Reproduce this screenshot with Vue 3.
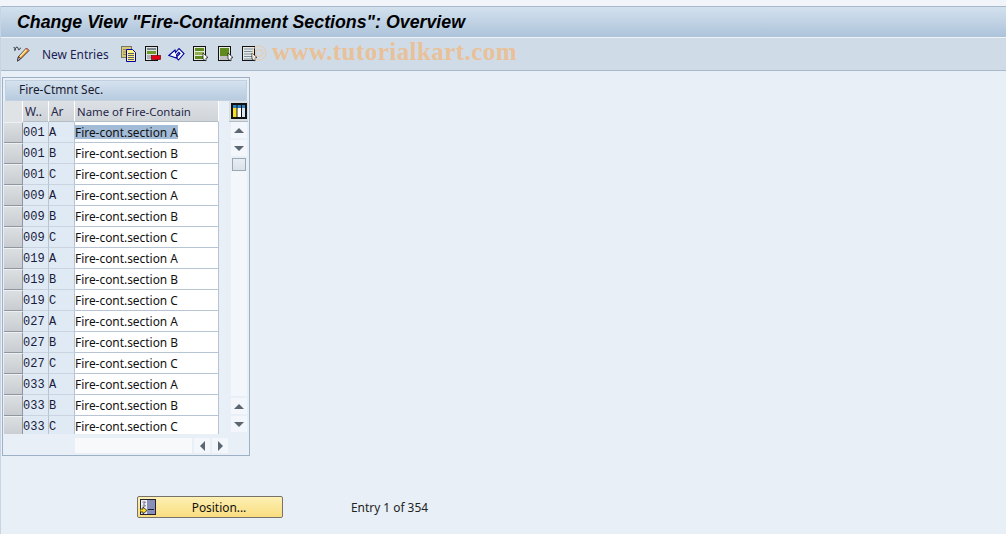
<template>
  <div class="screen">
    <div class="top-strip"></div>

    <!-- TITLE -->
    <div class="title-bar">
      <h1>Change View "Fire-Containment Sections": Overview</h1>
    </div>

    <!-- TOOLBAR -->
    <div class="toolbar">
      <svg class="ico pencil" width="17" height="16" viewBox="0 0 17 16">
        <path d="M.5 2c1-2 2.500 2 1.500 2.500S2.500 1 4 1s1 3.500 2 3 1-2.500 2-2" fill="none" stroke="#333" stroke-width="1" />
        <path d="M4.500 15l1-4.500L13.500 2 16 4.500 7.500 13z" fill="#f4a530" stroke="#3a3040" stroke-width="1" />
        <path d="M7 10.500l6.500-7" stroke="#fff0b0" stroke-width="1.300" />
        <path d="M4.500 15l1-4.500 2 2.500z" fill="#fff" stroke="#3a3040" stroke-width="1" />
        <path d="M13.500 2.500L15.500 4.500" stroke="#e06a50" stroke-width="1.500" />
      </svg>
      <span class="new-entries">New Entries</span>

      <svg class="ico copy" width="16" height="16" viewBox="0 0 16 16">
        <rect x="0.500" y="0.500" width="10" height="11" fill="#d8c878" stroke="#77776a" />
        <path d="M2 3.500h7M2 6h3M2 8.500h3" stroke="#8d8a60" />
        <path d="M5.500 3.500h6l3 3v9h-9z" fill="#fff27a" stroke="#0000b0" />
        <path d="M7 7.500h6M7 9.500h6M7 11.500h6M7 13.500h6" stroke="#5a5a70" />
      </svg>
      <svg class="ico delete" width="16" height="16" viewBox="0 0 16 16">
        <rect x="0.500" y="0.500" width="12" height="14" fill="#dfe3e6" stroke="#111" />
        <path d="M2 3h9" stroke="#7a8890" stroke-width="2" />
        <rect x="2" y="5" width="9" height="3" fill="#6d9a2a" />
        <path d="M2 10h5M2 12h5" stroke="#7a8890" />
        <rect x="6.500" y="9.500" width="9" height="4" fill="#e2001a" stroke="#7a0000" stroke-width="0.700" />
      </svg>
      <svg class="ico undo" width="17" height="16" viewBox="0 0 17 16">
        <path d="M.8 9.500L7 4l.6 2.500L11 2.500 16 7.500 10.500 14 8 11.500l4-4-1.200-1.200L8.500 9l.8 3.300z" fill="#f6f8ff" stroke="#00009c" stroke-width="1.100" />
      </svg>
      <svg class="ico prev" width="16" height="16" viewBox="0 0 16 16">
        <rect x="0.500" y="0.500" width="12" height="14" fill="#e6e9e4" stroke="#111" />
        <rect x="2" y="2" width="9" height="3" fill="#5f8a1f" />
        <rect x="2" y="6" width="9" height="3" fill="#8fb04a" />
        <rect x="2" y="10" width="9" height="3" fill="#5f8a1f" />
        <path d="M10 7l5 4.500-2 .5v3l-3-2z" fill="#fff" stroke="#111" stroke-width="0.700" />
      </svg>
      <svg class="ico next" width="16" height="16" viewBox="0 0 16 16">
        <rect x="0.500" y="0.500" width="12" height="14" fill="#e6e9e4" stroke="#111" />
        <rect x="2" y="2" width="9" height="8" fill="#5f8a1f" />
        <path d="M2 11h9M2 13h9" stroke="#99a" />
        <path d="M10 7l5 4.500-2 .5v3l-3-2z" fill="#fff" stroke="#111" stroke-width="0.700" />
      </svg>
      <svg class="ico other" width="16" height="16" viewBox="0 0 16 16">
        <rect x="0.500" y="0.500" width="12" height="14" fill="#e6e9e4" stroke="#111" />
        <path d="M2 3h9M2 5.500h9M2 8h9M2 10.500h9M2 13h9" stroke="#7a90a0" stroke-width="1.200" />
        <path d="M10 7l5 4.500-2 .5v3l-3-2z" fill="#fff" stroke="#111" stroke-width="0.700" />
      </svg>

      <!-- WATERMARK -->
      <svg class="mark-ring" width="16" height="18" viewBox="0 0 16 18">
        <circle cx="7" cy="9" r="7" fill="none" stroke="#ecc8a4" stroke-width="1" />
        <circle cx="7" cy="9" r="3.500" fill="none" stroke="#ecc8a4" stroke-width="1" />
      </svg>
      <span class="watermark">www.tutorialkart.com</span>
    </div>

    <!-- TABLE PANEL -->
    <div class="panel">
      <div class="panel-title">Fire-Ctmnt Sec.</div>

      <div class="grid-wrap">
        <div class="grid">
          <div class="head-row">
            <div class="sel-head"></div>
            <div class="col-w th">W..</div>
            <div class="col-ar th">Ar</div>
            <div class="col-name th name-head">Name of Fire-Contain</div>
          </div>
          <div class="row" v-for="(r, i) in rows" :key="i">
            <div class="sel"></div>
            <div class="col-w td-key">{{ r.w }}</div>
            <div class="col-ar td-key">{{ r.ar }}</div>
            <div class="col-name td-name">
              <span :class="{ selected: i === 0 }">Fire-cont.section {{ r.ar }}</span>
            </div>
          </div>
        </div>

        <!-- VERTICAL SCROLLBAR -->
        <div class="v-side">
          <button class="config">
            <svg width="16" height="16" viewBox="0 0 16 16">
              <rect width="16" height="16" fill="#111" />
              <rect x="2" y="2" width="3.500" height="3" fill="#2f7fc0" />
              <rect x="6.500" y="2" width="3.500" height="3" fill="#2f7fc0" />
              <rect x="11" y="2" width="3" height="3" fill="#2f7fc0" />
              <rect x="2" y="5" width="3.500" height="9" fill="#f8e020" />
              <rect x="6.500" y="5" width="3.500" height="9" fill="#fff" />
              <rect x="11" y="5" width="3" height="9" fill="#d8e4ee" />
            </svg>
          </button>
          <div class="v-scroll">
            <button class="sb"><i class="arrow up"></i></button>
            <button class="sb"><i class="arrow down"></i></button>
            <div class="thumb"></div>
            <div class="track"></div>
            <button class="sb"><i class="arrow up"></i></button>
            <button class="sb"><i class="arrow down"></i></button>
          </div>
        </div>
      </div>

      <!-- HORIZONTAL SCROLLBAR -->
      <div class="h-scroll">
        <div class="h-track"></div>
        <button class="sb"><i class="arrow left"></i></button>
        <button class="sb"><i class="arrow right"></i></button>
      </div>
    </div>

    <!-- FOOTER -->
    <div class="footer">
      <button class="position">
        <svg width="16" height="16" viewBox="0 0 16 16">
          <rect x="0.500" y="0.500" width="15" height="15" fill="#eef0f6" stroke="#223" />
          <rect x="7" y="1" width="8" height="14" fill="#8890b8" />
          <path d="M8 10.500h6" stroke="#223" />
          <path d="M2.500 3h3L3.500 5l2 2h-3" fill="none" stroke="#667" />
          <path d="M0 10h3V8l4 3.500L3 15v-2H0z" fill="#f8d820" stroke="#222" stroke-width="0.800" />
        </svg>
        <span>Position...</span>
      </button>
      <span class="entry-count">Entry 1 of 354</span>
    </div>
  </div>
</template>

<script setup>
const keys = ['001', '009', '019', '027', '033']
const areas = ['A', 'B', 'C']

const rows = keys.flatMap((w) => areas.map((ar) => ({ w, ar })))
</script>

<style>
html,
body {
  margin: 0;
  background: #e8eff7;
}
</style>

<style scoped>
.screen {
  width: 1006px;
  height: 534px;
  overflow: hidden;
  background: #e8eff7;
  box-shadow: inset 1px 0 #c8d4e2;
  font-family: "Noto Sans", sans-serif;
  font-size: 11.900px;
  color: #111;
}

.top-strip {
  height: 6px;
  background: #f1f5fa;
}

/* TITLE */
.title-bar {
  height: 31px;
  margin-left: 1px;
  display: flex;
  align-items: center;
  padding-left: 16px;
  border-top: 1px solid #a9b7cb;
  box-sizing: border-box;
  background: linear-gradient(to bottom, #d3e1ee, #adc3da);
}

.title-bar h1 {
  margin: 0;
  font-family: "Liberation Sans", sans-serif;
  font-size: 17.800px;
  font-style: italic;
  font-weight: 700;
  color: #000;
}

/* TOOLBAR */
.toolbar {
  position: relative;
  height: 34px;
  margin-left: 1px;
  box-sizing: border-box;
  border-top: 1px solid #eef3f8;
  border-bottom: 1px solid #a9b9cc;
  background: #cfdce8;
  display: flex;
  align-items: center;
}

.ico {
  flex: none;
}

.pencil {
  margin-left: 12px;
}

.new-entries {
  margin-left: 12px;
  color: #1c1c50;
}

.copy { margin-left: 12px; }
.delete { margin-left: 8px; }
.undo { margin-left: 7px; }
.prev { margin-left: 8px; }
.next { margin-left: 9px; }
.other { margin-left: 8px; }

.mark-ring {
  position: absolute;
  left: 251px;
  top: 6px;
}

.watermark {
  position: absolute;
  left: 271px;
  top: 0;
  font-family: "Liberation Serif", serif;
  font-size: 25px;
  font-weight: 700;
  letter-spacing: 0.450px;
  color: #e9c199;
}

/* TABLE PANEL */
.panel {
  width: 248px;
  height: 379px;
  margin: 6px 0 0 2px;
  box-sizing: border-box;
  border: 1px solid #9db0c6;
  padding: 2px 2px 0 1px;
  background: #e8eff7;
}

.panel-title {
  height: 21px;
  line-height: 17px;
  margin-left: 1px;
  padding-left: 13px;
  box-sizing: border-box;
  border: 1px solid #c3d0df;
  background: linear-gradient(to bottom, #d5e2ef, #b7cbdf);
  color: #1a1a30;
}

.grid-wrap {
  display: flex;
}

.grid {
  width: 215px;
  height: 333px;
  overflow: hidden;
  flex: none;
}

.head-row,
.row {
  display: flex;
  height: 21px;
}

.sel-head {
  width: 19px;
  background: #dfe3e6;
  border-right: 1px solid #fff;
  box-sizing: border-box;
}

.sel {
  width: 19px;
  box-sizing: border-box;
  background: linear-gradient(to bottom, #dcdfe2, #c8ccd0);
  border-right: 1px solid #8e979f;
  border-bottom: 1px solid #8e979f;
  border-top: 1px solid #eef0f2;
}

.col-w {
  width: 26px;
}

.col-ar {
  width: 26px;
}

.col-name {
  width: 144px;
}

.col-w,
.col-ar,
.col-name {
  flex: none;
  box-sizing: border-box;
}

.th {
  background: linear-gradient(to bottom, #dde1e5, #cfd4d9);
  border-right: 1px solid #fff;
  border-bottom: 1px solid #b4bcc5;
  line-height: 21px;
  padding-left: 2px;
  white-space: nowrap;
  color: #26264a;
}

.name-head {
  font-size: 11.400px;
}

.td-key {
  background: #dfeaf5;
  border-right: 1px solid #b7c4d3;
  border-bottom: 1px solid #c9d4e0;
  font-family: "Liberation Mono", monospace;
  font-size: 12px;
  line-height: 22px;
  color: #1a1a3a;
}

.td-name {
  background: #fff;
  border-right: 1px solid #b7c4d3;
  border-bottom: 1px solid #b7c4d3;
  line-height: 21px;
  color: #111;
}

.selected {
  display: inline-block;
  height: 14px;
  line-height: 14px;
  background: #a2bbd6;
}

/* SCROLLBARS */
.v-side {
  width: 28px;
  flex: none;
}

.config {
  display: block;
  width: 19px;
  height: 21px;
  margin-left: 10px;
  padding: 2px;
  border: 0;
  border-bottom: 1px solid #b4bcc5;
  background: #d9dee3;
  box-sizing: border-box;
}

.config svg {
  display: block;
}

.v-scroll {
  margin-left: 12px;
  width: 16px;
  display: flex;
  flex-direction: column;
  height: 312px;
}

.sb {
  flex: none;
  width: 16px;
  height: 16px;
  padding: 0;
  margin: 0 0 2px;
  border: 0;
  background: #f3f6fa;
  display: flex;
  align-items: center;
  justify-content: center;
}

.arrow {
  display: block;
  width: 0;
  height: 0;
}

.arrow.up {
  border-left: 5px solid transparent;
  border-right: 5px solid transparent;
  border-bottom: 5px solid #5b6670;
}

.arrow.down {
  border-left: 5px solid transparent;
  border-right: 5px solid transparent;
  border-top: 5px solid #5b6670;
}

.arrow.left {
  border-top: 5px solid transparent;
  border-bottom: 5px solid transparent;
  border-right: 5px solid #5b6670;
}

.arrow.right {
  border-top: 5px solid transparent;
  border-bottom: 5px solid transparent;
  border-left: 5px solid #5b6670;
}

.thumb {
  flex: none;
  width: 14px;
  height: 13px;
  margin-left: 1px;
  box-sizing: border-box;
  border: 1px solid #9aa8b6;
  background: linear-gradient(to bottom, #e9eef3, #d9e1e9);
}

.track {
  flex: 1;
  background: #f3f6fa;
  margin-bottom: 2px;
}

.h-scroll {
  display: flex;
  gap: 2px;
  margin: 4px 0 0 71px;
}

.h-track {
  width: 117px;
  height: 15px;
  background: #f7f9fb;
}

.h-scroll .sb {
  height: 15px;
  margin: 0;
}

/* FOOTER */
.footer {
  display: flex;
  align-items: center;
  margin: 40px 0 0 137px;
}

.position {
  width: 146px;
  height: 22px;
  padding: 0 0 0 2px;
  box-sizing: border-box;
  border: 1px solid #77736a;
  border-radius: 2px;
  background: linear-gradient(to bottom, #fdf0b4, #f9dd7f);
  display: flex;
  align-items: center;
  font-family: inherit;
  font-size: inherit;
  color: #111;
}

.position svg {
  flex: none;
}

.position span {
  flex: 1;
  text-align: center;
}

.entry-count {
  margin-left: 68px;
  color: #222;
}
</style>
